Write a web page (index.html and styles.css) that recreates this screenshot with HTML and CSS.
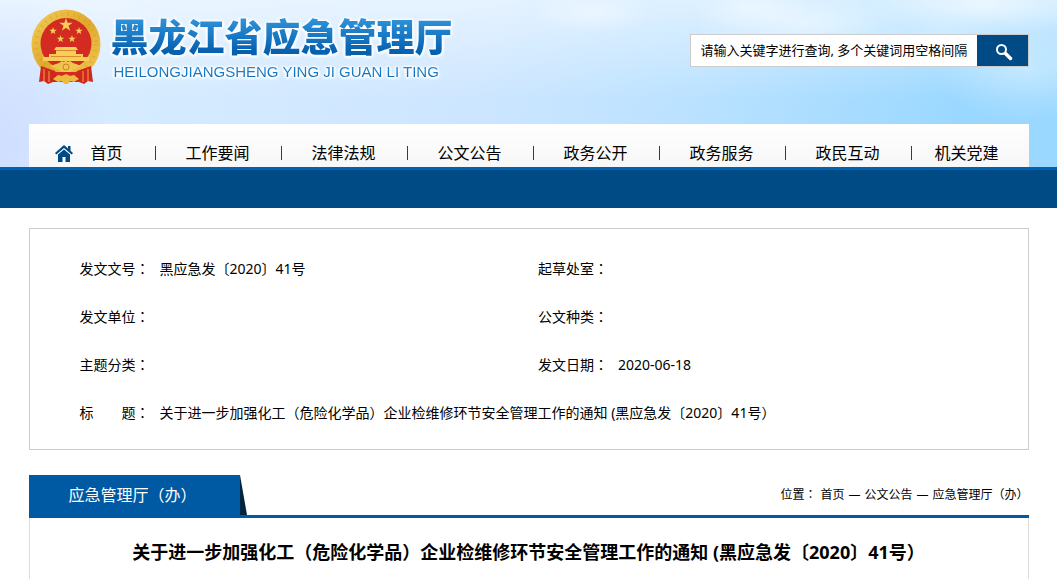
FILE: index.html
```html
<!DOCTYPE html>
<html lang="zh-CN">
<head>
<meta charset="utf-8">
<meta name="viewport" content="width=device-width, initial-scale=1">
<title>黑龙江省应急管理厅</title>
<link rel="stylesheet" href="styles.css">
</head>
<body>
<header class="site-header">
  <div class="container">
    <div class="banner">
      <a class="brand" href="#">
        <svg class="emblem" viewBox="0 0 70 76" aria-hidden="true">
          <defs>
            <linearGradient id="gold" x1="0" y1="0" x2="1" y2="1">
              <stop offset="0" stop-color="#f3cf5c"/><stop offset=".5" stop-color="#e0a92c"/><stop offset="1" stop-color="#f2cb55"/>
            </linearGradient>
            <path id="star" d="M0-1 .23-.31H.95L.36.12.59.81 0 .38-.59.81-.36.12-.95-.31H-.23Z"/>
          </defs>
          <ellipse cx="35" cy="35.500" rx="34.500" ry="35" fill="url(#gold)"/>
          <ellipse cx="35" cy="35.500" rx="30" ry="30.500" fill="none" stroke="#c98f20" stroke-width="4" stroke-dasharray="1 5" opacity=".4"/>
          <circle cx="35" cy="34.500" r="25.500" fill="#d32b21"/>
          <g fill="#f5cf58">
            <use href="#star" transform="translate(35 16) scale(7)"/>
            <use href="#star" transform="translate(22 22) scale(4)"/>
            <use href="#star" transform="translate(48 22) scale(4)"/>
            <use href="#star" transform="translate(29.500 30) scale(4)"/>
            <use href="#star" transform="translate(41 30) scale(4)"/>
            <path d="M25 38h20l2 3h-2v4h7v3h6v4H12v-4h6v-3h7v-4h-2Z"/>
          </g>
          <path d="M25 41.500h20M20 47.500h30" stroke="#dc8a30" stroke-width="1"/>
          <path d="M8 73 10 57l14 5 3 6h16l3-6 14-5 2 16-5-1-4 3-5-2H22l-5 2-4-3Z" fill="#cf271e"/>
          <path d="M13 60v12M18 62v11M52 62v11M57 60v12" stroke="#eda93b" stroke-width="1" fill="none"/>
          <path d="m19 57 9-3 3-2 2 1 2-2 2 2 2-1 3 2 9 3-9 4-4 3h-6l-4-3Z" fill="#efc550"/>
          <path d="M24 63h22l-3 5-8-2-8 2Z" fill="#d32b21"/>
          <path d="m22 70 5-4 4 1 4-2 4 2 4-1 5 4-5 3-4-1-2 3h-4l-2-3-4 1Z" fill="#edba40"/>
          <circle cx="35" cy="58" r="3" fill="none" stroke="#c98420"/>
        </svg>
        <span class="brand-text">
          <span class="brand-name"><span class="ink">黑龙江省应急管理厅</span></span>
          <span class="brand-pinyin"><span class="ink">HEILONGJIANGSHENG YING JI GUAN LI TING</span></span>
        </span>
      </a>
      <form class="search">
        <input class="search-input" type="text" aria-label="关键字查询" value="请输入关键字进行查询, 多个关键词用空格间隔">
        <button class="search-button" type="button" aria-label="搜索">
          <svg viewBox="0 0 18 18" width="18" height="18" aria-hidden="true"><circle cx="6.500" cy="6.500" r="4.500" fill="none" stroke="#fff" stroke-width="2"/><path d="m10.500 10.500 5 5" stroke="#fff" stroke-width="3.500" stroke-linecap="round"/></svg>
        </button>
      </form>
    </div>
    <nav class="nav">
      <a class="nav-home" href="#"><svg viewBox="0 0 18 17" width="18" height="17" aria-hidden="true"><path d="M9 0 0 8l1.300 1.500L9 3l7.700 6.500L18 8l-2.500-2.200V1H13v2.600Z"/><path d="m9 4.500-6 5V17h4.500v-5h3v5H15V9.500Z"/></svg>首页</a>
      <a href="#">工作要闻</a>
      <a href="#">法律法规</a>
      <a href="#">公文公告</a>
      <a href="#">政务公开</a>
      <a href="#">政务服务</a>
      <a href="#">政民互动</a>
      <a href="#">机关党建</a>
    </nav>
  </div>
</header>
<div class="band"></div>
<main class="container">
  <dl class="info">
    <div class="field"><dt>发文文号<span class="colon" lang="zh-TW">：</span></dt><dd>黑应急发〔2020〕41号</dd></div>
    <div class="field"><dt>起草处室<span class="colon" lang="zh-TW">：</span></dt><dd></dd></div>
    <div class="field"><dt>发文单位<span class="colon" lang="zh-TW">：</span></dt><dd></dd></div>
    <div class="field"><dt>公文种类<span class="colon" lang="zh-TW">：</span></dt><dd></dd></div>
    <div class="field"><dt>主题分类<span class="colon" lang="zh-TW">：</span></dt><dd></dd></div>
    <div class="field"><dt>发文日期<span class="colon" lang="zh-TW">：</span></dt><dd>2020-06-18</dd></div>
    <div class="field field-wide"><dt>标　　题<span class="colon" lang="zh-TW">：</span></dt><dd>关于进一步加强化工（危险化学品）企业检维修环节安全管理工作的通知 (黑应急发〔2020〕41号）</dd></div>
  </dl>
  <section class="article">
    <div class="article-bar">
      <h2 class="tab">应急管理厅（办）</h2>
      <svg class="tab-fold" viewBox="0 0 7 40" preserveAspectRatio="none" aria-hidden="true"><path d="M0 0 7 40H0Z"/></svg>
      <div class="crumbs"><span>位置<span class="colon" lang="zh-TW">：</span></span><a href="#">首页</a><span>—</span><a href="#">公文公告</a><span>—</span><a href="#">应急管理厅（办）</a></div>
    </div>
    <div class="article-body">
      <h1 class="article-title">关于进一步加强化工（危险化学品）企业检维修环节安全管理工作的通知 (黑应急发〔2020〕41号）</h1>
    </div>
  </section>
</main>
</body>
</html>
```
FILE: styles.css
```css
* { box-sizing: border-box; }
body {
  margin: 0;
  background: #fff;
  color: #000;
  font: 14px/24px "Noto Sans", "Noto Sans CJK SC", sans-serif;
}
a { color: inherit; text-decoration: none; }
.container { max-width: 1000px; margin: 0 auto; }
.colon { font-family: "Noto Sans CJK TC", sans-serif; line-height: 1; }

.site-header {
  background:
    radial-gradient(ellipse 60px 22px at 71% 4%, rgba(255,255,255,.4), transparent),
    radial-gradient(ellipse 110px 30px at 76% 14%, rgba(255,255,255,.5), transparent),
    radial-gradient(ellipse 120px 30px at 93% 3%, rgba(255,255,255,.6), transparent),
    radial-gradient(ellipse 70px 24px at 89% 24%, rgba(255,255,255,.3), transparent),
    radial-gradient(ellipse 90px 50px at 97% 42%, rgba(255,255,255,.3), transparent),
    radial-gradient(ellipse 60px 20px at 56% 8%, rgba(255,255,255,.4), transparent),
    radial-gradient(ellipse 110px 160px at 0 85%, rgba(206,218,255,.8), transparent),
    linear-gradient(180deg, rgba(255,255,255,.5), transparent 60%),
    linear-gradient(100deg, #d9edff 0, #cde6ff 45%, #bbe2ff 65%, #9bd8ff 90%);
}
.banner {
  display: flex;
  justify-content: space-between;
  align-items: flex-start;
  height: 124px;
  padding-top: 9px;
}
.brand { display: flex; gap: 10px; padding-left: 2px; }
.emblem { width: 70px; height: 76px; }
.brand-text { display: flex; flex-direction: column; gap: 4px; padding-top: 5px; }
.brand-name, .brand-pinyin {
  display: block;
  filter: drop-shadow(1px 0 1px #fff) drop-shadow(-1px 0 1px #fff) drop-shadow(0 1px 1px #fff);
}
.brand-name { font: 900 38px/42px "Noto Sans CJK SC", sans-serif; }
.brand-pinyin { padding-left: 3px; font: 15px/24px "Liberation Sans", sans-serif; }
.ink {
  display: block;
  background: linear-gradient(#2f93da 10%, #0560b0 90%);
  background-clip: text;
  -webkit-background-clip: text;
  color: transparent;
}
.search {
  display: flex;
  width: 339px;
  height: 33px;
  margin-top: 25px;
  border: 1px solid #ccc;
}
.search-input {
  flex: 1;
  min-width: 0;
  padding: 0 0 2px 10px;
  border: 0;
  background: #fff;
  color: #000;
  font: 13px/20px "Noto Sans", "Noto Sans CJK SC", sans-serif;
}
.search-button {
  display: flex;
  align-items: center;
  justify-content: center;
  width: 51px;
  padding: 3px 0 0 3px;
  border: 0;
  background: #004a86;
}
.nav {
  display: grid;
  grid-template-columns: repeat(7, 126fr) 118fr;
  height: 43px;
  padding-top: 17px;
  background: linear-gradient(#fff, #f7f7f7);
  font-size: 16px;
  line-height: 24px;
  text-align: center;
}
.nav a + a {
  background: linear-gradient(#004a86, #004a86) left 5px / 1px 14px no-repeat;
}
.nav a:last-child { padding-right: 6px; }
.nav .nav-home { display: flex; height: 24px; align-items: center; gap: 18px; padding-left: 26px; }
.nav-home svg { fill: #004a86; }

.band { height: 41px; border-top: 3px solid #0063b1; background: #004b86; }

.info {
  display: grid;
  grid-template-columns: 1fr 1fr;
  gap: 24px 0;
  margin: 20px 0 25px;
  padding: 28px 31px 24px 50px;
  border: 1px solid #ccc;
}
.field { display: flex; min-height: 24px; }
.field-wide { grid-column: 1 / -1; }
.field dt { width: 80px; flex: none; }
.field dd { margin: 0; }

.article-bar { display: flex; border-bottom: 3px solid #0059a3; }
.tab {
  width: 211px;
  margin: 0 0 -3px;
  padding: 8px 0 11px 40px;
  background: #0059a3;
  color: #fff;
  font-size: 16px;
  font-weight: 400;
  line-height: 24px;
}
.tab-fold { width: 7px; height: 40px; fill: #002540; }
.crumbs {
  display: flex;
  gap: 4px;
  margin-left: auto;
  padding-top: 8px;
  font-size: 12px;
  line-height: 24px;
}
.article-body { min-height: 61px; padding: 21px 0 14px; border: solid #ddd; border-width: 0 1px; }
.article-title { margin: 0; font-size: 18px; font-weight: 700; line-height: 26px; text-align: center; }
```
